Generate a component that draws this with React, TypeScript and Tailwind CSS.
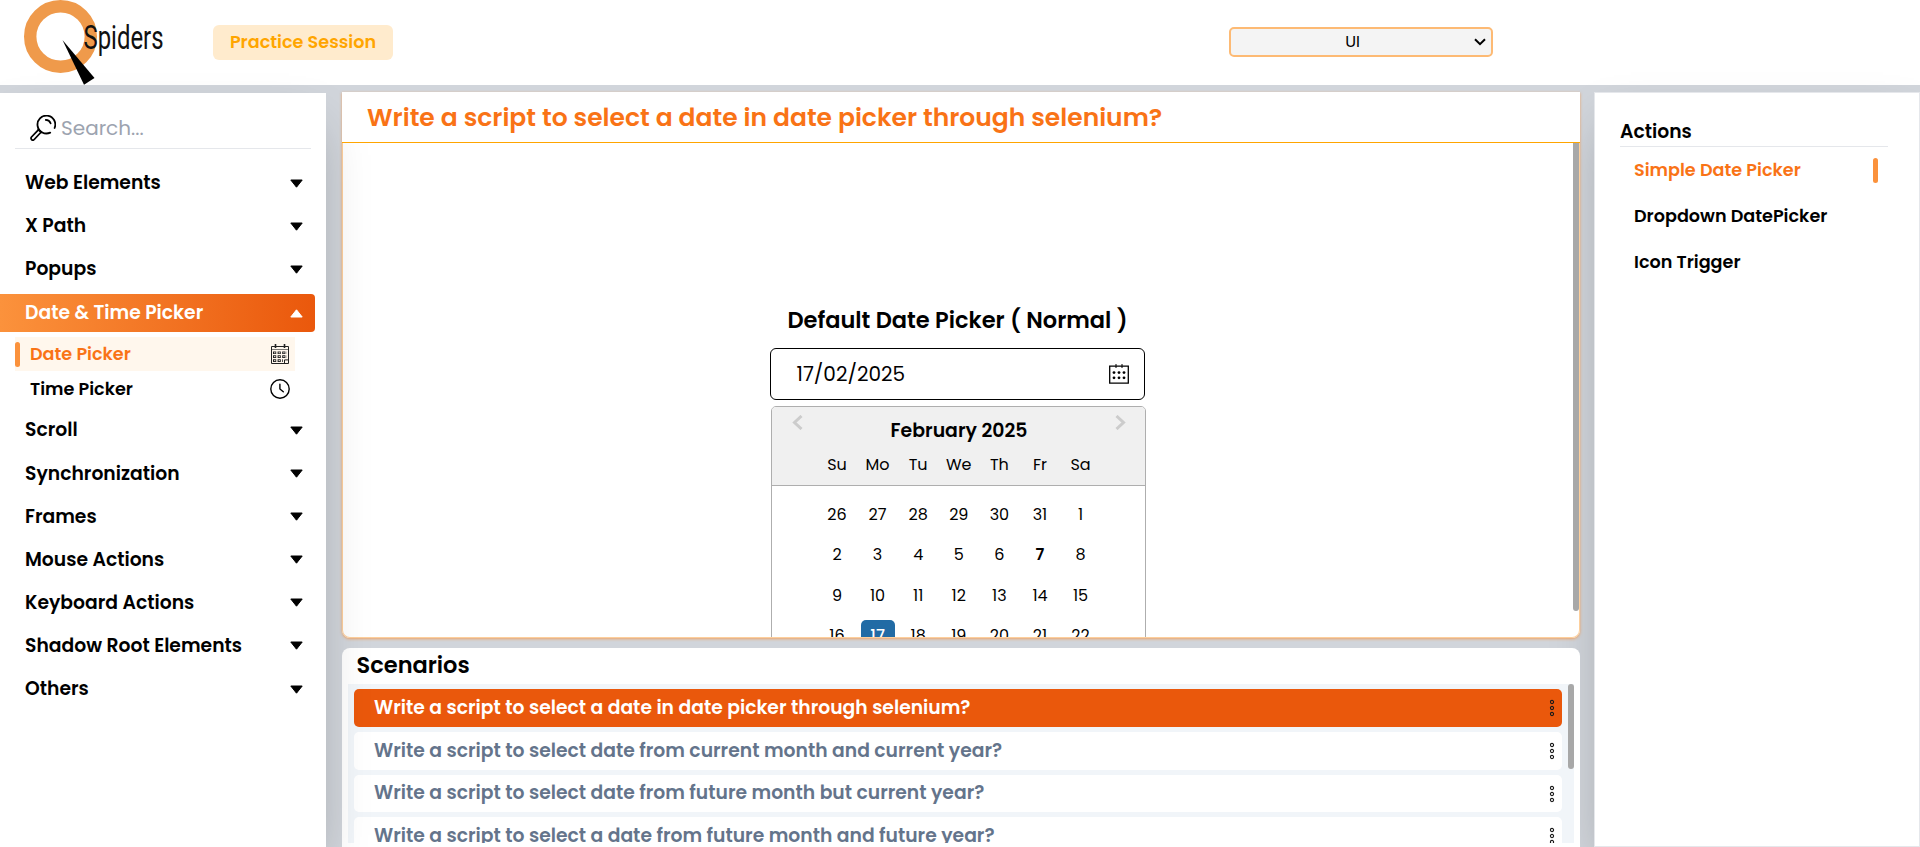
import type { ReactNode } from "react";

function Logo() {
  return (
    <svg width="172" height="85" viewBox="0 0 172 85" className="shrink-0">
      <circle cx="60.5" cy="36.5" r="30.3" fill="none" stroke="#ef9a4b" strokeWidth="12.4" />
      <path d="M62.5 40 L94.5 78 L84 84.8 Z" fill="#000" />
      <text x="83.5" y="49.3" fill="#111" fontFamily="Roboto, 'Liberation Sans', sans-serif" fontSize="34" textLength="80" lengthAdjust="spacingAndGlyphs">Spiders</text>
    </svg>
  );
}

function SearchIcon() {
  return (
    <svg width="26" height="26" viewBox="0 0 26 26" fill="none" stroke="#000" strokeWidth="1.8" strokeLinecap="round" strokeLinejoin="round">
      <path d="M24.6 13A8.9 8.9 0 1 0 20.2 17.6" />
      <path d="M15.8 4.9a5.2 5.2 0 0 1 4.8 3.4" />
      <path d="M8.6 14.6 1.5 22a1.8 1.8 0 0 0 2.7 2.5L11.2 17" />
      <path d="M8.4 14.8l3 2.6" />
    </svg>
  );
}

function Caret({ up = false }: { up?: boolean }) {
  return (
    <svg width="13" height="9" viewBox="0 0 13 9" fill="currentColor" stroke="currentColor" strokeWidth="1" strokeLinejoin="round">
      {up ? <path d="M6.5 .8 12.2 8H.8z" /> : <path d="M6.5 8.2.8 1h11.4z" />}
    </svg>
  );
}

function GridCalendarIcon() {
  return (
    <svg width="18" height="20" viewBox="0 0 18 20" fill="none" stroke="#222" strokeWidth="1">
      <path d="M.5 2.5h17v17H.5z" />
      <path d="M.5 5.5h17" strokeWidth=".6" />
      <path d="M4.5 0v4M13.5 0v4" strokeWidth="1.6" />
      <path d="M2 8.8h14M2 12.6h14M2 16.6h10" strokeWidth="2.6" strokeDasharray="3.2 1.4" />
      <path d="M3 8.8h13M3 12.6h13M3 16.6h9" strokeWidth=".9" stroke="#fff7ed" strokeDasharray="1.4 3.2" />
      <path d="M13.5 19.5v-3.6h4" />
    </svg>
  );
}

function ClockIcon() {
  return (
    <svg width="20" height="20" viewBox="0 0 20 20" fill="none" stroke="#000" strokeWidth="1.4" strokeLinecap="round">
      <circle cx="10" cy="10" r="9.2" />
      <path d="M9.9 5.2V10l3.4 2.8" />
    </svg>
  );
}

function FieldCalendarIcon() {
  return (
    <svg width="20" height="20" viewBox="0 0 20 20" fill="none" stroke="#000">
      <path d="M.7 2.2h18.6v17H.7z" strokeWidth="1.3" />
      <path d="M7 0v4M13 0v4" strokeWidth="1" />
      <g fill="#000" stroke="none">
        <circle cx="5" cy="8.6" r="1.4" /><circle cx="10" cy="8.6" r="1.4" /><circle cx="15" cy="8.6" r="1.4" />
        <circle cx="5" cy="13.8" r="1.4" /><circle cx="10" cy="13.8" r="1.4" /><circle cx="15" cy="13.8" r="1.4" />
      </g>
    </svg>
  );
}

function Dots() {
  return (
    <svg width="6" height="18" viewBox="0 0 6 18" fill="none" stroke="#1a1a1a" strokeWidth="1.1">
      <circle cx="3" cy="3" r="1.6" />
      <circle cx="3" cy="9" r="1.6" />
      <circle cx="3" cy="15" r="1.6" />
    </svg>
  );
}

function MenuRow({ label }: { label: string }) {
  return (
    <div className="flex h-[38px] w-[315px] items-center justify-between pr-3 pl-[25px]">
      <span className="text-[18.75px] font-semibold">{label}</span>
      <Caret />
    </div>
  );
}

function SubRow({ label, active = false, icon }: { label: string; active?: boolean; icon: ReactNode }) {
  return (
    <div className={`ml-[15px] flex w-[280px] items-center ${active ? "h-[34px] bg-[#fff7ed] text-[#f97316]" : "h-[36px]"}`}>
      <span className={`h-[25px] w-[5px] rounded-sm ${active ? "bg-[#fb923c]" : ""}`} />
      <span className="ml-[10px] flex-1 text-[17.6px] font-semibold">{label}</span>
      <span className="mr-[5px] flex w-[20px] justify-center">{icon}</span>
    </div>
  );
}

const topMenu = ["Web Elements", "X Path", "Popups"];

const bottomMenu = [
  "Scroll",
  "Synchronization",
  "Frames",
  "Mouse Actions",
  "Keyboard Actions",
  "Shadow Root Elements",
  "Others",
];

const scenarios = [
  "Write a script to select a date in date picker through selenium?",
  "Write a script to select date from current month and current year?",
  "Write a script to select date from future month but current year?",
  "Write a script to select a date from future month and future year?",
];

const weekDays = ["Su", "Mo", "Tu", "We", "Th", "Fr", "Sa"];
const days = [26, 27, 28, 29, 30, 31, 1, 2, 3, 4, 5, 6, 7, 8, 9, 10, 11, 12, 13, 14, 15, 16, 17, 18, 19, 20, 21, 22];

function Sidebar() {
  return (
    <aside className="relative z-20 mt-px w-[326px] shrink-0 bg-white shadow-2xl">
      <div className="mx-[15px] mt-[15px] flex h-[41px] items-center border-b border-[#e5e7eb] pl-[15px]">
        <SearchIcon />
        <span className="ml-[5px] text-[20px] text-[#9ca3af]">Search...</span>
      </div>
      <div className="mt-[15px] flex flex-col gap-[5.1px]">
        {topMenu.map((m) => <MenuRow key={m} label={m} />)}
      </div>
      <div className="mt-[5.9px] flex h-[38px] w-[315px] items-center justify-between rounded-r bg-[linear-gradient(to_right,#fb923c,#ea580c)] pr-3 pl-[25px] text-white">
        <span className="text-[18.75px] font-semibold">Date &amp; Time Picker</span>
        <Caret up />
      </div>
      <div className="pt-[5px] pb-[4.4px]">
        <SubRow label="Date Picker" active icon={<GridCalendarIcon />} />
        <SubRow label="Time Picker" icon={<ClockIcon />} />
      </div>
      <div className="flex flex-col gap-[5.1px]">
        {bottomMenu.map((m) => <MenuRow key={m} label={m} />)}
      </div>
    </aside>
  );
}

function Calendar() {
  return (
    <div className="mt-[6px] ml-px w-[375px] rounded-[5px] border border-[#aeaeae] bg-white">
      <div className="rounded-t-[4px] border-b border-[#aeaeae] bg-[#f0f0f0]">
        <div className="flex h-[46px] items-start justify-between pt-[8px] pr-[18px] pl-[20px]">
          <svg width="11" height="15" viewBox="0 0 11 15" fill="none" stroke="#ccc" strokeWidth="3"><path d="M9.5 1 2.5 7.5l7 6.5" /></svg>
          <span className="mt-[2px] text-[18.88px] leading-[28px] font-semibold">February 2025</span>
          <svg width="11" height="15" viewBox="0 0 11 15" fill="none" stroke="#ccc" strokeWidth="3"><path d="M1.5 1l7 6.5-7 6.5" /></svg>
        </div>
        <div className="ml-[45.2px] grid h-[32px] w-[284.2px] grid-cols-7 text-center text-[16px] leading-[23px]">
          {weekDays.map((d) => <span key={d}>{d}</span>)}
        </div>
      </div>
      <div className="mt-[13px] ml-[45.2px] grid w-[284.2px] grid-cols-7 gap-y-[8px] text-center text-[16px]">
        {days.map((d) => (
          <span
            key={d}
            className={`mx-auto h-[32.4px] w-[34px] rounded-[5px] leading-[32.4px] ${d === 17 ? "bg-[#216ba5] font-medium text-white" : ""} ${d === 7 ? "font-semibold" : ""}`}
          >
            {d}
          </span>
        ))}
      </div>
    </div>
  );
}

function PickerPanel() {
  return (
    <section className="flex h-[546px] shrink-0 flex-col rounded-b-lg bg-white shadow-[0_1px_3px_rgba(251,146,60,0.75)]">
      <h1 className="relative z-30 h-[51px] shrink-0 border-b border-[#ffa500] bg-white pl-[25px] text-[25px] leading-[51px] font-semibold text-[#f97316]">
        {scenarios[0]}
      </h1>
      <div className="flex min-h-0 flex-1 overflow-hidden rounded-b-lg border border-t-0 border-[#fdcf9c]">
        <div className="flex flex-1 flex-col items-center pt-[161px] pr-[2px]">
          <div className="w-[375px]">
            <h2 className="pl-px text-center text-[22.5px] leading-[32px] font-semibold whitespace-nowrap">Default Date Picker ( Normal )</h2>
            <div className="mt-[12px] flex h-[52px] items-center justify-between rounded-md border border-black pr-[15px] pl-[26px]">
              <span className="text-[20px]">17/02/2025</span>
              <FieldCalendarIcon />
            </div>
            <Calendar />
          </div>
        </div>
        <div className="h-[468px] w-[6px] rounded-b bg-[#a8a8a8]" />
      </div>
    </section>
  );
}

function ScenariosPanel() {
  return (
    <section className="mt-[10px] flex min-h-0 flex-1 flex-col overflow-hidden rounded-t-lg bg-white px-[6px] pb-1">
      <h2 className="h-[36px] shrink-0 pl-[8.5px] text-[22.5px] leading-[35px] font-semibold">Scenarios</h2>
      <div className="flex min-h-0 flex-1 overflow-hidden bg-[#f1f5f9]">
        <ul className="flex-1 pt-[5.3px] pr-[6px] pl-[6px]">
          {scenarios.map((s, i) => (
            <li
              key={s}
              className={`mb-[5px] flex h-[37.7px] items-center justify-between rounded-[5px] pr-[7px] pl-[20px] text-[18.75px] font-semibold ${i === 0 ? "bg-[#ea580c] text-white" : "bg-white text-[#64748b]"}`}
            >
              <span>{s}</span>
              <Dots />
            </li>
          ))}
        </ul>
        <div className="h-[85px] w-[6px] rounded bg-[#a8a8a8]" />
      </div>
    </section>
  );
}

function ActionsPanel() {
  return (
    <aside className="ml-[14px] flex-1 border border-[#e5e7eb] bg-white pl-[25px] shadow-2xl">
      <h3 className="mt-[24px] h-[30px] w-[268px] border-b border-[#e5e7eb] text-[18.75px] leading-[29px] font-semibold">Actions</h3>
      <ul className="w-[258px] pl-[14px] text-[17.6px] font-semibold">
        <li className="flex h-[46px] items-center justify-between text-[#f97316]">
          <span>Simple Date Picker</span>
          <span className="h-[25px] w-[5px] rounded-sm bg-[#fb923c]" />
        </li>
        <li className="flex h-[46px] items-center">Dropdown DatePicker</li>
        <li className="flex h-[46px] items-center">Icon Trigger</li>
      </ul>
    </aside>
  );
}

export default function App() {
  return (
    <div className="flex h-[847px] w-[1920px] flex-col overflow-hidden bg-[#d1d5db] font-[Poppins,Inter,'Liberation_Sans',sans-serif] leading-normal text-black">
      <header className="flex h-[85px] shrink-0 bg-white">
        <Logo />
        <div className="mt-[25px] ml-[41px] h-[35px] w-[180px] rounded-md bg-[#ffebcd] text-center text-[17.6px] leading-[34px] font-semibold text-[#ffa500]">
          Practice Session
        </div>
        <button className="mt-[27px] ml-[836px] flex h-[30px] w-[264px] items-center rounded-[5px] border-2 border-[#fdba74] bg-[#f4f4f4] pr-[5px] text-[16px]">
          <span className="flex-1 text-center">UI</span>
          <svg width="12" height="8" viewBox="0 0 12 8" fill="none" stroke="#000" strokeWidth="2"><path d="M1 1.2 6 6.2l5-5" /></svg>
        </button>
      </header>
      <div className="flex min-h-0 flex-1 pt-[7px]">
        <Sidebar />
        <main className="relative ml-[16px] flex w-[1238px] shrink-0 flex-col">
          <PickerPanel />
          <ScenariosPanel />
        </main>
        <ActionsPanel />
      </div>
    </div>
  );
}
